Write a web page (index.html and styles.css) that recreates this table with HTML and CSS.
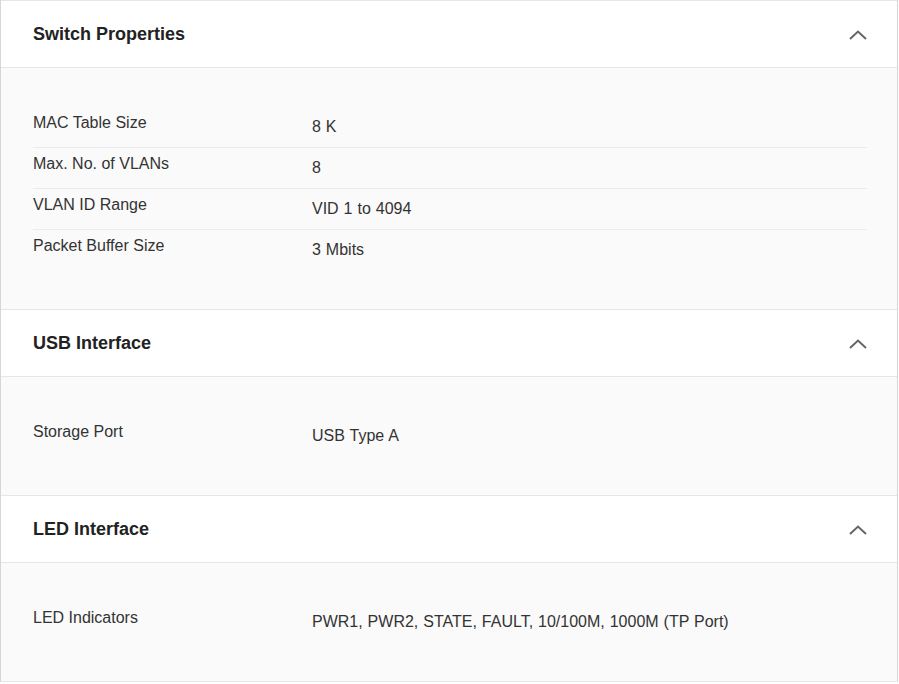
FILE: index.html
```html
<!DOCTYPE html>
<html lang="en">
<head>
<meta charset="utf-8">
<title>Specifications</title>
<link rel="stylesheet" href="styles.css">
</head>
<body>
<div class="accordion">
  <section class="section">
    <div class="header">
      <h2 class="title">Switch Properties</h2>
      <svg class="chevron" width="18" height="10" viewBox="0 0 18 10"><path d="M1 9 L9 1.5 L17 9" fill="none" stroke="#666" stroke-width="2"/></svg>
    </div>
    <div class="content">
      <div class="row"><div class="label">MAC Table Size</div><div class="value">8 K</div></div>
      <div class="row"><div class="label">Max. No. of VLANs</div><div class="value">8</div></div>
      <div class="row"><div class="label">VLAN ID Range</div><div class="value">VID 1 to 4094</div></div>
      <div class="row"><div class="label">Packet Buffer Size</div><div class="value">3 Mbits</div></div>
    </div>
  </section>
  <section class="section">
    <div class="header">
      <h2 class="title">USB Interface</h2>
      <svg class="chevron" width="18" height="10" viewBox="0 0 18 10"><path d="M1 9 L9 1.5 L17 9" fill="none" stroke="#666" stroke-width="2"/></svg>
    </div>
    <div class="content">
      <div class="row"><div class="label">Storage Port</div><div class="value">USB Type A</div></div>
    </div>
  </section>
  <section class="section">
    <div class="header">
      <h2 class="title">LED Interface</h2>
      <svg class="chevron" width="18" height="10" viewBox="0 0 18 10"><path d="M1 9 L9 1.5 L17 9" fill="none" stroke="#666" stroke-width="2"/></svg>
    </div>
    <div class="content">
      <div class="row"><div class="label">LED Indicators</div><div class="value">PWR1, PWR2, STATE, FAULT, 10/100M, 1000M (TP Port)</div></div>
    </div>
  </section>
</div>
</body>
</html>
```
FILE: styles.css
```css
* { box-sizing: border-box; }
html, body { margin: 0; padding: 0; background: #fff; }
body {
  font-family: "Liberation Sans", Arial, sans-serif;
  color: #333;
}
.accordion {
  width: 898px;
  border-left: 1px solid #d6d6d6;
  border-right: 1px solid #d6d6d6;
  border-bottom: 1px solid #e6e6e6;
}
.section { border-top: 1px solid #e6e6e6; }
.header {
  height: 67px;
  display: flex;
  align-items: center;
  justify-content: space-between;
  padding: 0 30px 0 32px;
  background: #fff;
  border-bottom: 1px solid #e6e6e6;
}
.title {
  margin: 0;
  font-size: 18px;
  font-weight: bold;
  color: #222;
}
.chevron { display: block; margin-top: 1px; }
.content {
  background: #fafafa;
  padding: 39px 30px 39px 32px;
}
.row {
  display: flex;
  align-items: flex-start;
  height: 41px;
  border-bottom: 1px solid #ececec;
  font-size: 16px;
  line-height: 24px;
}
.row:last-child { border-bottom: none; height: 40px; }
.label {
  width: 279px;
  flex: none;
  padding-top: 4px;
}
.value {
  padding-top: 8px;
  word-spacing: 0.5px;
}
```
